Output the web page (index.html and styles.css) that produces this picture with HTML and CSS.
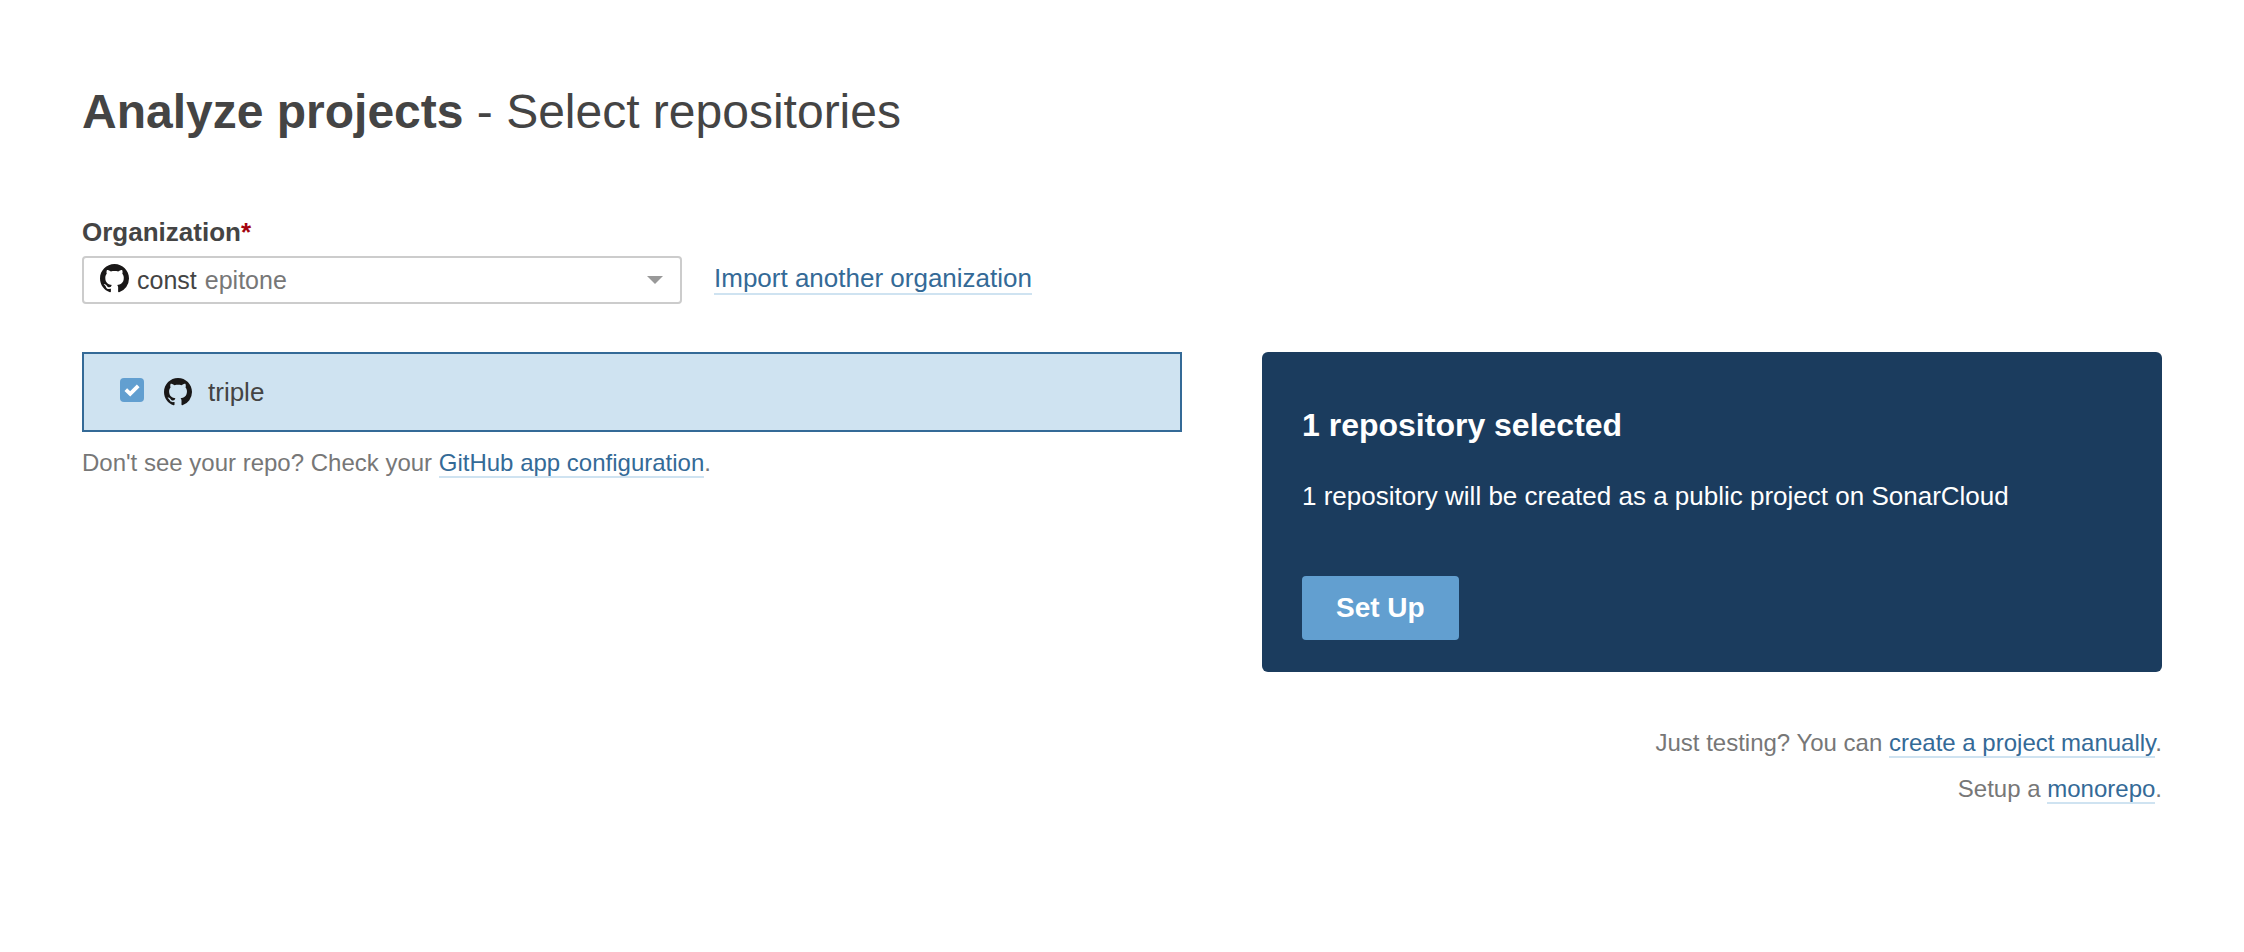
FILE: index.html
```html
<!DOCTYPE html>
<html lang="en">
<head>
  <meta charset="utf-8">
  <title>Analyze projects - Select repositories</title>
  <link rel="stylesheet" href="styles.css">
</head>
<body>
  <svg class="symbols" aria-hidden="true">
    <symbol id="github" viewBox="0 0 16 16">
      <path d="M8 0C3.58 0 0 3.58 0 8c0 3.54 2.29 6.53 5.47 7.59.4.07.55-.17.55-.38 0-.19-.01-.82-.01-1.49-2.01.37-2.53-.49-2.69-.94-.09-.23-.48-.94-.82-1.13-.28-.15-.68-.52-.01-.53.63-.01 1.08.58 1.23.82.72 1.21 1.87.87 2.33.66.07-.52.28-.87.51-1.07-1.78-.2-3.64-.89-3.64-3.95 0-.87.31-1.59.82-2.15-.08-.2-.36-1.02.08-2.12 0 0 .67-.21 2.2.82.64-.18 1.32-.27 2-.27s1.36.09 2 .27c1.53-1.04 2.2-.82 2.2-.82.44 1.1.16 1.92.08 2.12.51.56.82 1.27.82 2.15 0 3.07-1.87 3.75-3.65 3.95.29.25.54.73.54 1.48 0 1.07-.01 1.93-.01 2.2 0 .21.15.46.55.38A8.01 8.01 0 0 0 16 8c0-4.42-3.58-8-8-8z"/>
    </symbol>
  </svg>
  <main class="page">
    <h1 class="page-title"><strong>Analyze projects</strong> - Select repositories</h1>

    <label class="field-label" for="organization">Organization<span class="required">*</span></label>
    <div class="organization-row">
      <div class="select">
        <select class="select-control" id="organization" required>
          <option>const epitone</option>
        </select>
        <div class="select-value" aria-hidden="true">
          <svg class="select-icon"><use href="#github"/></svg>
          <span>const</span>
          <span class="select-key">epitone</span>
          <span class="select-arrow"></span>
        </div>
      </div>
      <a class="link import-link" href="#import">Import another organization</a>
    </div>

    <div class="columns">
      <section>
        <label class="repository">
          <input class="checkbox" type="checkbox" checked>
          <svg class="repository-icon" aria-hidden="true"><use href="#github"/></svg>
          <span>triple</span>
        </label>
        <p class="note">Don't see your repo? Check your <a class="link" href="#configuration">GitHub app configuration</a>.</p>
      </section>

      <aside>
        <div class="summary">
          <h2 class="summary-title">1 repository selected</h2>
          <p class="summary-text">1 repository will be created as a public project on SonarCloud</p>
          <button class="button" type="button">Set Up</button>
        </div>
        <div class="alternatives">
          <p class="note">Just testing? You can <a class="link" href="#manual">create a project manually</a>.</p>
          <p class="note">Setup a <a class="link" href="#monorepo">monorepo</a>.</p>
        </div>
      </aside>
    </div>
  </main>
</body>
</html>
```
FILE: styles.css
```css
* {
  box-sizing: border-box;
}

body {
  margin: 0;
  background: #fff;
  color: #444;
  font: 26px/32px "Liberation Sans", Arial, sans-serif;
}

h1,
h2,
p {
  margin: 0;
}

.symbols {
  display: none;
}

.page {
  padding: 84px 82px;
}

.page-title {
  margin-bottom: 76px;
  font-size: 48px;
  line-height: 56px;
  font-weight: 400;
}

.field-label {
  display: block;
  margin-bottom: 8px;
  font-weight: 700;
}

.required {
  color: #a4030f;
}

.organization-row {
  display: flex;
  align-items: center;
  gap: 32px;
  margin-bottom: 48px;
}

.select {
  display: grid;
  width: 600px;
  height: 48px;
}

.select-control,
.select-value {
  grid-area: 1 / 1;
}

.select-control {
  appearance: none;
  border: 2px solid #ccc;
  border-radius: 4px;
  background: #fff;
  color: transparent;
  font: inherit;
}

.select-value {
  display: flex;
  align-items: center;
  gap: 8px;
  padding: 0 19px 0 18px;
  font-size: 25px;
  pointer-events: none;
}

.select-icon {
  width: 29px;
  height: 29px;
  margin-bottom: 4px;
  fill: #191717;
}

.select-key {
  color: #777;
}

.select-arrow {
  margin-left: auto;
  border: solid transparent;
  border-width: 8px 8px 0;
  border-top-color: #999;
}

.link {
  border-bottom: 2px solid #cfe3f1;
  color: #346a97;
  text-decoration: none;
}

.import-link {
  margin-bottom: 2px;
  line-height: 30px;
}

.columns {
  display: grid;
  grid-template-columns: 11fr 9fr;
  gap: 80px;
}

.repository {
  display: flex;
  align-items: center;
  height: 80px;
  padding: 0 36px;
  border: 2px solid #346a97;
  background: #cfe3f1;
}

.checkbox {
  appearance: none;
  width: 24px;
  height: 24px;
  margin: 0 20px 4px 0;
  border-radius: 4px;
  background: #629fd0 url("data:image/svg+xml,%3Csvg xmlns='http://www.w3.org/2000/svg' viewBox='0 0 24 24'%3E%3Cpath d='M5.8 11.6 10.2 15.8 18.2 7.8' fill='none' stroke='%23fff' stroke-width='3.8'/%3E%3C/svg%3E");
}

.repository-icon {
  width: 28px;
  height: 28px;
  margin-right: 16px;
  fill: #191717;
}

.note {
  color: #777;
  font-size: 24px;
}

.repository + .note {
  margin-top: 15px;
}

.summary {
  padding: 56px 40px 32px;
  border-radius: 6px;
  background: #1b3c5e;
  color: #fff;
}

.summary-title {
  margin-bottom: 38px;
  font-size: 32px;
  line-height: 34px;
}

.summary-text {
  margin-bottom: 64px;
}

.button {
  display: block;
  height: 64px;
  padding: 0 34px;
  border: 0;
  border-radius: 4px;
  background: #629fd0;
  color: #fff;
  font: 700 28px "Liberation Sans", Arial, sans-serif;
}

.alternatives {
  display: grid;
  gap: 14px;
  margin-top: 55px;
  text-align: right;
}
```
